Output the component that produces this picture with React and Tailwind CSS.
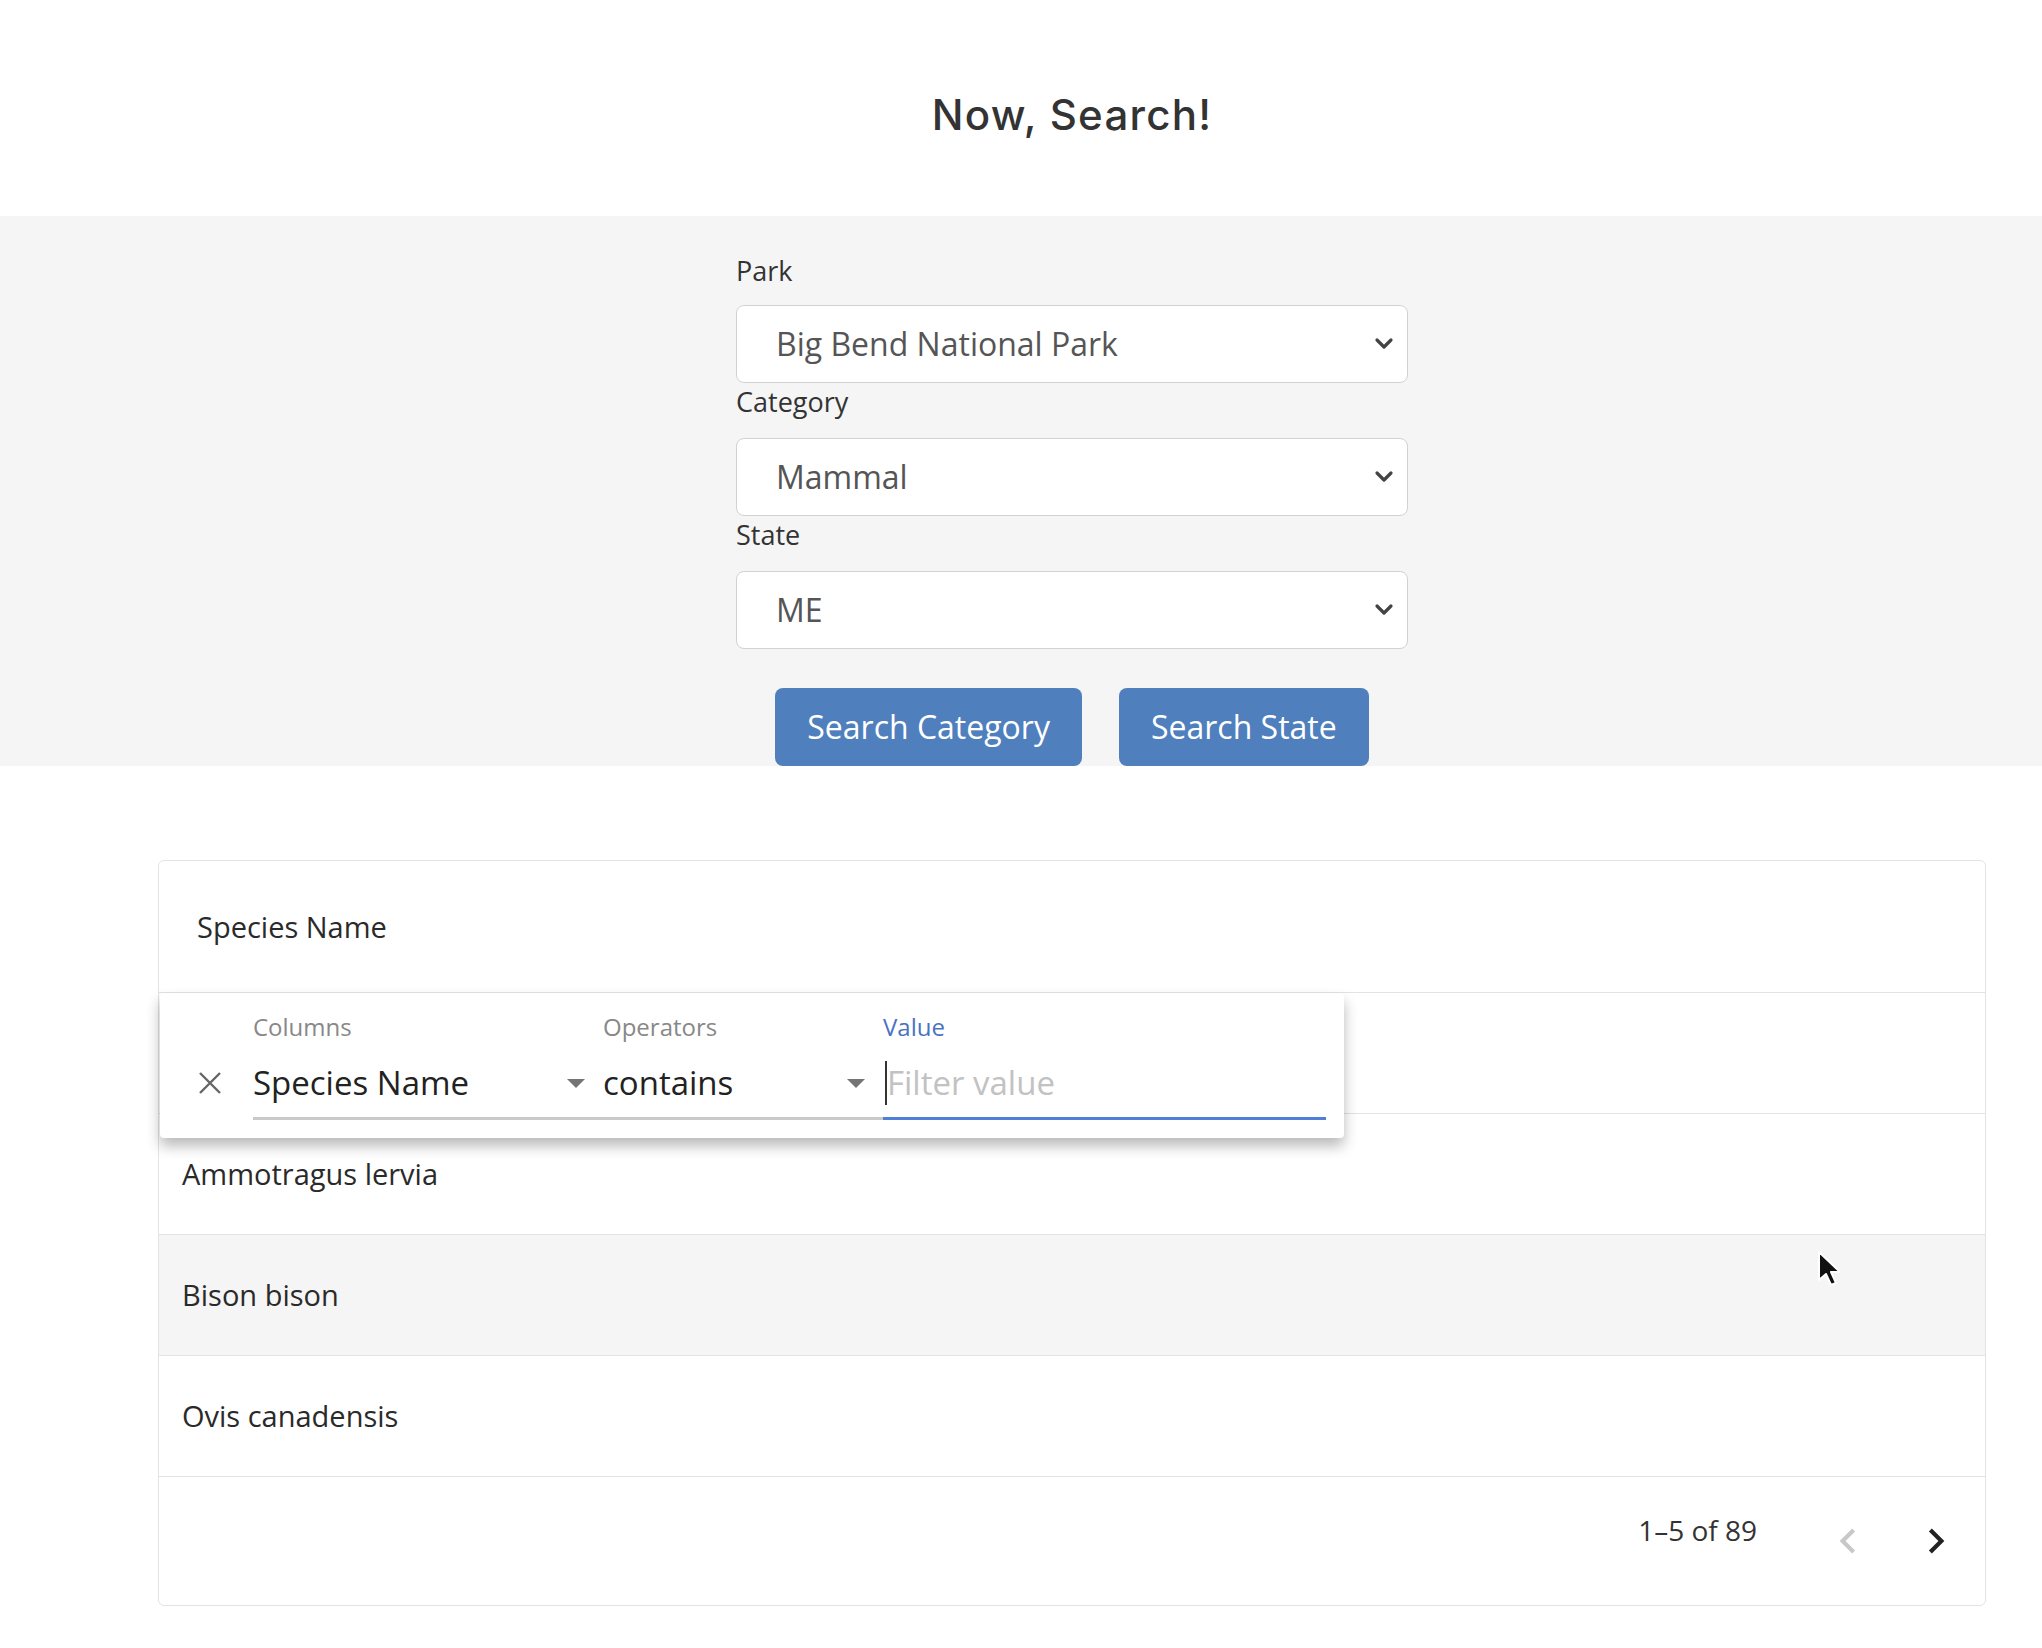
import React from 'react';

// Simple bootstrap-ish select box (display only)
function SelectBox({ value }) {
  return (
    <div className="h-[78px] w-full flex items-center justify-between bg-white border border-[#d2d2d2] rounded-[8px] pl-[39px] pr-[13px] text-[32px] text-[#555]">
      <span>{value}</span>
      <svg width="20" height="14" viewBox="0 0 20 14" fill="none">
        <path d="M3 3l7 7 7-7" stroke="#444" strokeWidth="3.2" strokeLinecap="round" strokeLinejoin="round" />
      </svg>
    </div>
  );
}

function DropTriangle() {
  return (
    <svg width="18" height="9" viewBox="0 0 18 9">
      <path d="M0 0h18L9 9z" fill="#757575" />
    </svg>
  );
}

const rows = ['', 'Ammotragus lervia', 'Bison bison', 'Ovis canadensis'];

export default function App() {
  return (
    <div className="min-h-screen w-full bg-white font-['Open_Sans',sans-serif] text-[#333]">
      {/* title */}
      <div className="h-[216px] pl-[102px] pt-[12px] flex items-center justify-center">
        <h1 className="font-['Inter',sans-serif] font-medium text-[42px] tracking-[0.03em] text-[#333]">Now, Search!</h1>
      </div>

      {/* search form */}
      <div className="bg-[#f5f5f5] pl-[102px] pt-[36px] flex justify-center">
        <div className="w-[672px] flex flex-col">
          <label className="text-[27px] leading-[38px] mb-[15px] text-[#333]">Park</label>
          <SelectBox value="Big Bend National Park" />
          <label className="text-[27px] leading-[38px] mb-[17px] text-[#333]">Category</label>
          <SelectBox value="Mammal" />
          <label className="text-[27px] leading-[38px] mb-[17px] text-[#333]">State</label>
          <SelectBox value="ME" />
          <div className="mt-[39px] flex justify-center gap-[37px]">
            <button className="h-[78px] px-[32px] rounded-[8px] bg-[#4f80bd] text-white text-[32px]">Search Category</button>
            <button className="h-[78px] px-[32px] rounded-[8px] bg-[#4f80bd] text-white text-[32px]">Search State</button>
          </div>
        </div>
      </div>

      {/* results grid */}
      <div className="pl-[102px] pt-[94px] pb-[40px]">
        <div className="relative mx-[56px] border border-[#e3e3e3] rounded-[6px] text-[#2a2a2a]">
          <div className="h-[132px] flex items-center pl-[38px] border-b border-[#e3e3e3] text-[29px]">Species Name</div>
          {rows.map((r, i) => (
            <div
              key={i}
              className={`h-[121px] flex items-center pl-[23px] border-b border-[#e3e3e3] text-[29px] ${i === 2 ? 'bg-[#f5f5f5]' : 'bg-white'}`}
            >
              {r}
            </div>
          ))}
          <div className="h-[128px] flex items-center justify-end pr-[24px]">
            <span className="text-[28px] text-[#333] pb-[22px] mr-[66px]">1–5 of 89</span>
            <div className="flex items-center gap-[38px]">
              <svg width="50" height="50" viewBox="0 0 24 24">
                <path d="M15.41 16.59 10.83 12l4.58-4.59L14 6l-6 6 6 6z" fill="#c8c8c8" />
              </svg>
              <svg width="50" height="50" viewBox="0 0 24 24">
                <path d="M8.59 16.59 13.17 12 8.59 7.41 10 6l6 6-6 6z" fill="#222" />
              </svg>
            </div>
          </div>

          {/* filter panel */}
          <div className="absolute left-[1px] top-[132px] w-[1184px] h-[145px] bg-white rounded-[4px] shadow-[0_8px_14px_rgba(0,0,0,0.28)] flex">
            <div className="pl-[38px] pr-[31px] pt-[78px]">
              <svg width="24" height="24" viewBox="0 0 24 24">
                <path d="M2 2l20 20M22 2L2 22" stroke="#666" strokeWidth="2.4" />
              </svg>
            </div>
            <div className="w-[350px] pt-[19px] flex flex-col">
              <div className="h-[30px] leading-[30px] text-[24px] text-[#888]">Columns</div>
              <div className="mt-[18px] h-[46px] flex items-center justify-between pr-[18px] text-[33px] text-[#222]">
                <span>Species Name</span>
                <DropTriangle />
              </div>
              <div className="h-[11px] border-b-[3px] border-[#c9c9c9] box-content" />
            </div>
            <div className="w-[280px] pt-[19px] flex flex-col">
              <div className="h-[30px] leading-[30px] text-[24px] text-[#888]">Operators</div>
              <div className="mt-[18px] h-[46px] flex items-center justify-between pr-[18px] text-[33px] text-[#222]">
                <span>contains</span>
                <DropTriangle />
              </div>
              <div className="h-[11px] border-b-[3px] border-[#c9c9c9] box-content" />
            </div>
            <div className="w-[443px] pt-[19px] flex flex-col">
              <div className="h-[30px] leading-[30px] text-[24px] text-[#4a72c2]">Value</div>
              <div className="mt-[18px] h-[46px] flex items-center text-[33px] text-[#c2c2c2]">
                <span className="w-[2px] h-[44px] bg-[#333] ml-[2px]" />
                <span>Filter value</span>
              </div>
              <div className="h-[11px] border-b-[3px] border-[#4f7fd6] box-content" />
            </div>
          </div>

          {/* mouse pointer */}
          <svg className="absolute left-[1658px] top-[389px]" width="26" height="38" viewBox="0 0 26 38">
            <path d="M2 2v28l7-6 5 11 5-2-5-11h9z" fill="#111" stroke="#fff" strokeWidth="2" strokeLinejoin="round" />
          </svg>
        </div>
      </div>
    </div>
  );
}
